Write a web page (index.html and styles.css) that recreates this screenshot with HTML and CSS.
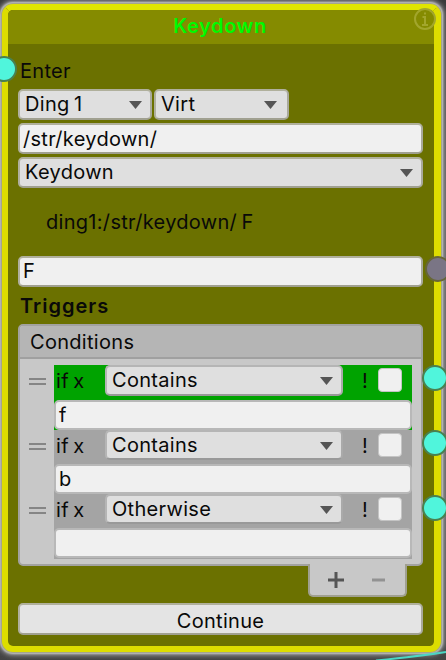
FILE: index.html
```
<!DOCTYPE html>
<html lang="en">
<head>
<meta charset="utf-8">
<title>Keydown</title>
<link rel="stylesheet" href="styles.css">
</head>
<body>
<svg class="wire" viewBox="0 0 80 12"><path d="M10 10.5 C35 8 55 6 80 2" /></svg>
<main class="node">
  <header class="title"><span>Keydown</span>
    <svg class="info" viewBox="0 0 24 24"><circle cx="12" cy="12" r="10"/><path d="M9.5 10H12v8M9 18h6M12 5.5v2"/></svg>
  </header>
  <section class="content">
    <div class="label enter">Enter</div>
    <div class="pair">
      <div class="box select">Ding 1<i class="arrow"></i></div>
      <div class="box select">Virt<i class="arrow"></i></div>
    </div>
    <div class="box field path">/str/keydown/</div>
    <div class="box select event">Keydown<i class="arrow"></i></div>
    <div class="label message">ding1:/str/keydown/ F</div>
    <div class="box field">F</div>
    <h2 class="label triggers">Triggers</h2>
    <div class="list">
      <div class="list-title">Conditions</div>
      <div class="rows">
        <div class="row">
          <i class="grip"></i>
          <div class="condition active">
            <div class="test"><span class="if">if x</span><div class="box select">Contains<i class="arrow"></i></div><span class="not">!</span><i class="check"></i></div>
            <div class="box field">f</div>
          </div>
        </div>
        <div class="row">
          <i class="grip"></i>
          <div class="condition">
            <div class="test"><span class="if">if x</span><div class="box select">Contains<i class="arrow"></i></div><span class="not">!</span><i class="check"></i></div>
            <div class="box field">b</div>
          </div>
        </div>
        <div class="row">
          <i class="grip"></i>
          <div class="condition">
            <div class="test"><span class="if">if x</span><div class="box select">Otherwise<i class="arrow"></i></div><span class="not">!</span><i class="check"></i></div>
            <div class="box field"></div>
          </div>
        </div>
      </div>
    </div>
    <div class="tools">
      <svg viewBox="0 0 18 18"><path d="M1 9h16M9 1v16"/></svg>
      <svg class="off" viewBox="0 0 18 18"><path d="M3 9h13"/></svg>
    </div>
    <div class="box button">Continue</div>
  </section>
</main>
<i class="port in"></i>
<i class="port value"></i>
<i class="port out1"></i>
<i class="port out2"></i>
<i class="port out3"></i>
</body>
</html>
```
FILE: styles.css
```
* { box-sizing: border-box; }
body {
  margin: 0;
  width: 446px;
  height: 660px;
  padding: 4px 5px 0 2px;
  overflow: hidden;
  position: relative;
  background: linear-gradient(#3a3a3a, #626262 30%, #626262 75%, #444);
  font: 20px/24px Inter, sans-serif;
  font-feature-settings: "calt" 0;
  letter-spacing: .3px;
  word-spacing: -1.5px;
  color: #090909;
}
.node {
  height: 648px;
  border: 6px solid #dddd00;
  border-right-width: 7px;
  border-top-color: #e0e500;
  border-radius: 11px;
  background: #6b7100;
  box-shadow: 0 0 0 1px #a5a58c, 0 0 2px 2px #c4c4c4, 0 0 4px 4px #858585;
}
.title {
  height: 34px;
  border-radius: 5px 5px 0 0;
  background: #858b00;
  color: #00fa00;
  font-weight: 600;
  letter-spacing: .6px;
  line-height: 32px;
  text-align: center;
  position: relative;
  padding-right: 2px;
}
.info {
  position: absolute;
  right: -3px;
  top: -3px;
  width: 24px;
  height: 24px;
  fill: none;
  stroke: #a2a62c;
  stroke-width: 2;
}
.content { padding: 15px 11px 0 10px; }
.label { height: 24px; padding-left: 3px; white-space: nowrap; }
.enter { padding-left: 2px; }
.box {
  height: 31px;
  border: 2px solid #aaaaa0;
  border-color: #b0b09c #a9a99c #a0a090 #b0b0a0;
  border-radius: 5px;
  line-height: 26px;
  padding-left: 5px;
  position: relative;
  white-space: nowrap;
}
.select { background: #dfdfdf; }
.field { background: #f0f0f0; padding-left: 3px; }
.arrow {
  position: absolute;
  right: 8px;
  top: 10px;
  width: 13px;
  height: 8px;
  background: #555;
  clip-path: polygon(0 0, 100% 0, 50% 100%);
}
.pair { display: flex; gap: 2px; margin-top: 6px; }
.pair .box { width: 135px; }
.pair .box:first-child { width: 134px; }
.pair .box:last-child .arrow { right: 10px; }
.path { margin-top: 3px; line-height: 28px; }
.event { margin-top: 3px; }
.message { margin: 22px 0; padding-left: 28px; }
.triggers { margin: 7px 0 6px; padding-left: 2px; font-size: 20px; font-weight: 600; letter-spacing: 1px; }
.list {
  height: 242px;
  border: 2px solid #a2a2a0;
  border-radius: 5px;
  background: #c8c8c8;
}
.list-title {
  height: 33px;
  border-bottom: 2px solid #a0a0a0;
  border-radius: 3px 3px 0 0;
  background: #b5b5b5;
  padding-left: 10px;
  line-height: 33px;
}
.rows { padding: 6px 9px 0 9px; }
.row { display: flex; gap: 8px; height: 65px; }
.row + .row { height: 64px; }
.row + .row + .row { height: 65px; }
.grip { width: 17px; height: 7px; margin-top: 13px; border: solid #858585; border-width: 2px 0; }
.condition { flex: 1; background: #a4a4a4; }
.active { background: #00a300; }
.test { display: flex; height: 35px; }
.row + .row .test { height: 34px; }
.if { width: 51px; padding-left: 2px; line-height: 32px; }
.test .select { width: 238px; border-color: #b5b5b5 #aaa #999 #b5b5b5; }
.row + .row .test .select { height: 30px; }
.not { width: 35px; padding-left: 19px; line-height: 32px; }
.check {
  width: 24px;
  height: 24px;
  margin-top: 3px;
  border: 1.5px solid #c4c4c4;
  border-radius: 4px;
  background: #f0f0f0;
}
.condition > .field { height: 30px; padding-left: 3px; border-color: #b8b8b8; }
.tools {
  width: 99px;
  height: 33px;
  margin: -2px 16px 0 auto;
  border: 2px solid #a0a090;
  border-top: 0;
  border-radius: 0 0 5px 5px;
  background: #c8c8c8;
  display: flex;
  gap: 24px;
  padding: 7px 0 0 17px;
  position: relative;
}
.tools svg { width: 18px; height: 18px; stroke: #555; stroke-width: 3; }
.tools .off { stroke: #929292; }
.button {
  height: 32px;
  margin-top: 6px;
  padding: 0;
  background: #e4e4e4;
  line-height: 32px;
  text-align: center;
}
.port {
  position: absolute;
  width: 26px;
  height: 26px;
  border: 2px solid #4a8050;
  border-radius: 50%;
  background: #50f5dc;
}
.in { left: -9px; top: 56px; }
.value { left: 425px; top: 256px; background: #7a7585; border-color: #676638; }
.out1 { left: 422px; top: 365px; }
.out2 { left: 422px; top: 430px; }
.out3 { left: 422px; top: 495px; }
.wire { position: absolute; left: 366px; top: 650px; width: 80px; height: 12px; fill: none; stroke: #4bd6c4; stroke-width: 2; z-index: 1; }
```
